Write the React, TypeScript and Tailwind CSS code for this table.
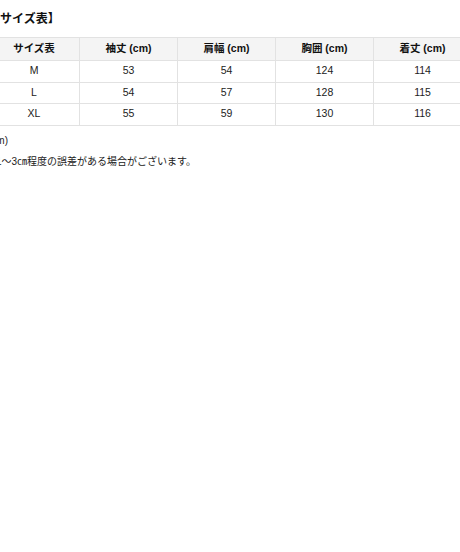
import React from "react";

const rows = [
  ["M", "53", "54", "124", "114"],
  ["L", "54", "57", "128", "115"],
  ["XL", "55", "59", "130", "116"],
];

const headers = ["サイズ表", "袖丈 (cm)", "肩幅 (cm)", "胸囲 (cm)", "着丈 (cm)"];

export default function App() {
  return (
    <div
      className="w-[460px] h-[552px] overflow-hidden bg-white text-[#222]"
      style={{ fontFamily: '"Liberation Sans", "Noto Sans CJK JP", sans-serif' }}
    >
      <div className="-ml-[12px] w-[483px] pt-[12px]">
        <h3 className="text-[12px] font-bold leading-[14px] text-[#111]">【サイズ表】</h3>
        <table className="mt-[11px] w-[483px] table-fixed border-collapse text-[10.5px]">
          <colgroup>
            <col className="w-[91px]" />
            <col className="w-[98px]" />
            <col className="w-[98px]" />
            <col className="w-[98px]" />
            <col className="w-[98px]" />
          </colgroup>
          <thead>
            <tr className="h-[23px] bg-[#f4f4f4]">
              {headers.map((h) => (
                <th
                  key={h}
                  className="border border-[#e2e2e2] p-0 text-center align-middle font-bold text-[#111]"
                >
                  {h}
                </th>
              ))}
            </tr>
          </thead>
          <tbody>
            {rows.map((r) => (
              <tr key={r[0]} className="h-[21.5px]">
                {r.map((c, i) => (
                  <td
                    key={i}
                    className="border border-[#e2e2e2] p-0 text-center align-middle"
                  >
                    {c}
                  </td>
                ))}
              </tr>
            ))}
          </tbody>
        </table>
        <p className="mt-[8px] text-[10px] leading-[14px]">(cm)</p>
        <p className="mt-[7.5px] -ml-[2px] text-[10px] leading-[14px]">※1～3㎝程度の誤差がある場合がございます。</p>
      </div>
    </div>
  );
}
